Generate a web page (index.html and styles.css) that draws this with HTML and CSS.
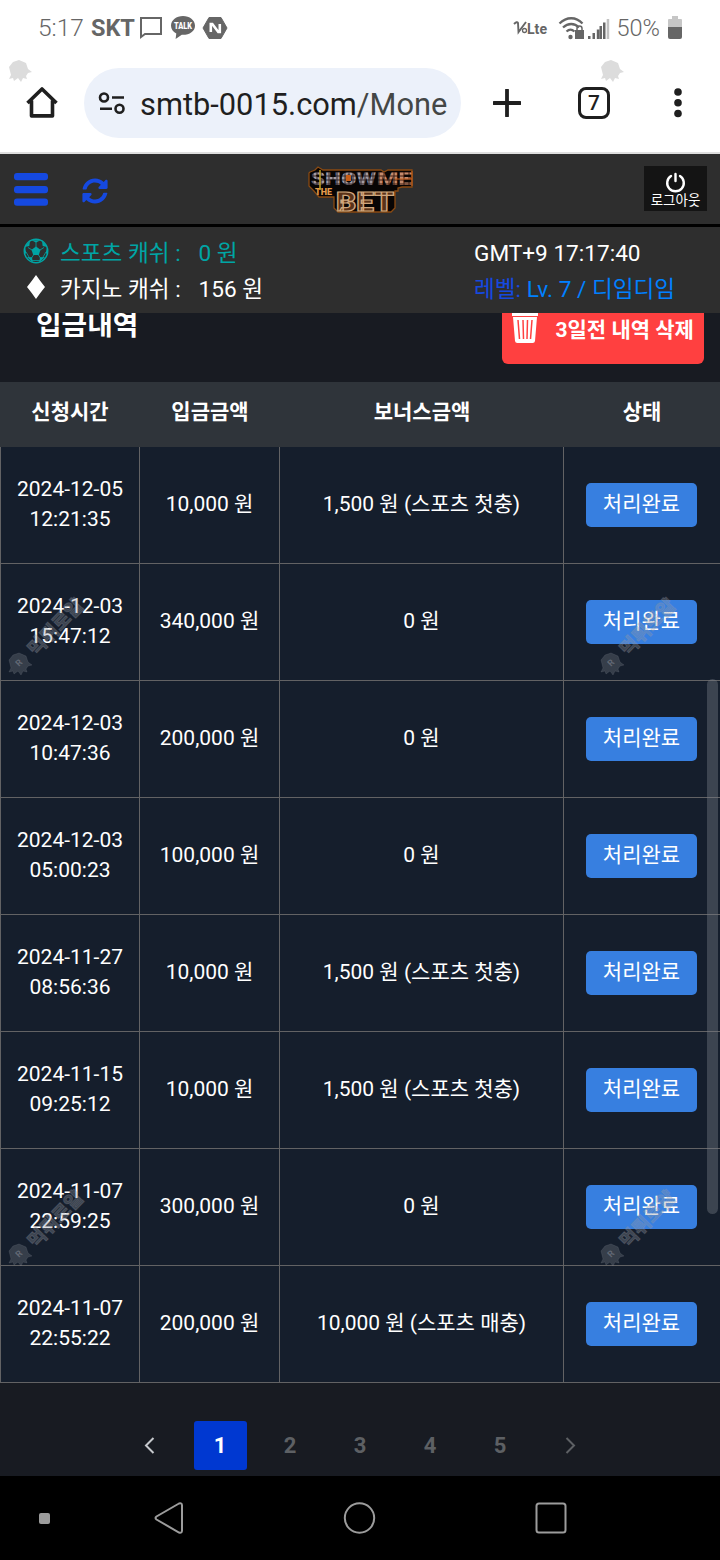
FILE: index.html
```
<!DOCTYPE html>
<html lang="ko">
<head>
  <meta charset="UTF-8">
  <meta name="viewport" content="width=device-width, initial-scale=1.0">
  <title>입금내역</title>
  <link rel="stylesheet" href="styles.css">
</head>
<body>
  <div class="browser">
    <div class="status">
      <div class="status-left">
        <span class="clock">5:17</span>
        <b class="carrier">SKT</b>
        <svg class="ico-msg" width="24" height="24" viewBox="0 0 24 24"><path d="M2 2h20v16H6l-4 3z" fill="none" stroke="#666" stroke-width="2"/></svg>
        <svg class="ico-talk" width="26" height="26" viewBox="0 0 26 26"><path d="M13 1C6.500 1 1 5 1 10.700c0 3.300 2 6 5.300 7.700l-.7 5.600 6.200-4.200c7.200.5 13.200-3.500 13.200-9.100C25 5 19.500 1 13 1z" fill="#666"/><text x="13" y="14" text-anchor="middle" textLength="18" lengthAdjust="spacingAndGlyphs" font-size="8.500" font-weight="900" fill="#fff">TALK</text></svg>
        <svg class="ico-n" width="26" height="24" viewBox="0 0 26 24"><path d="M7 1.500h12L25 12l-6 10.500H7L1 12z" fill="#666" stroke="#666" stroke-linejoin="round"/><path d="M8.800 16V8h1.500l6 8h1.500V8" fill="none" stroke="#fff" stroke-width="2.600"/></svg>
      </div>
      <div class="status-right">
        <svg width="36" height="18" viewBox="0 0 36 18"><path d="M1 5q3-3 4-1l.5 9L13 3" fill="none" stroke="#666" stroke-width="1.900"/><circle cx="11.500" cy="11.500" r="2" fill="none" stroke="#666" stroke-width="1.300"/><text x="14" y="14.500" textLength="20" lengthAdjust="spacingAndGlyphs" font-size="15.500" font-weight="700" fill="#666">Lte</text></svg>
        <svg class="ico-wifi" width="27" height="24" viewBox="0 0 27 24"><g fill="none" stroke="#666" stroke-width="2.300"><path d="M1.500 7.500c7-7 16.500-7 23 0"/><path d="M5 11.500c5-4.700 11.500-4.700 16 0"/><path d="M8.500 15.500c3-2.600 5-2.600 8 0"/></g><circle cx="12.500" cy="21" r="2.200" fill="#666"/><path d="M17 14h9v9h-9z" fill="#666"/><path d="M19 14v-1.500a2.500 2.500 0 0 1 5 0V14" fill="none" stroke="#666" stroke-width="1.500"/></svg>
        <svg class="ico-signal" width="22" height="22" viewBox="0 0 22 22" fill="#666"><path d="M0 18h2.500v3H0zM4.500 15H7v6H4.500zM8.800 11.500h2.500V21H8.800zM11.500 8H14v13h-2.500zM15 4.500h2.500V21H15z"/><path d="M18.700 1h2.500v20h-2.500z" fill="#c2c2c2"/></svg>
        <span class="percent">50%</span>
        <svg class="ico-battery" width="14" height="23" viewBox="0 0 14 23"><path d="M4 0h6v3h3a1 1 0 0 1 1 1v8H0V4a1 1 0 0 1 1-1h3z" fill="#c6c6c6"/><path d="M0 11h14v10a2 2 0 0 1-2 2H2a2 2 0 0 1-2-2z" fill="#666"/></svg>
      </div>
    </div>
    <div class="toolbar">
      <svg class="ico-home" width="36" height="36" viewBox="0 0 36 36"><path d="M3.500 18 18 4l14.500 14M7.500 15.500v15.400h21V15.500" fill="none" stroke="#1f1f1f" stroke-width="3.600" stroke-linejoin="round"/></svg>
      <div class="url">
        <svg width="28" height="24" viewBox="0 0 28 24" fill="none" stroke="#1f1f1f" stroke-width="2.600"><circle cx="6" cy="6.500" r="4"/><path d="M14 6.500h12M2 17.700h12"/><circle cx="21.500" cy="17.700" r="4"/></svg>
        <span class="address">smtb-0015.com<i>/Mone</i></span>
      </div>
      <svg class="ico-plus" width="28" height="28" viewBox="0 0 28 28"><path d="M14 1v26M1 14h26" stroke="#1f1f1f" stroke-width="3.800" stroke-linecap="round"/></svg>
      <span class="tabs">7</span>
      <svg class="ico-more" width="8" height="30" viewBox="0 0 8 30" fill="#1f1f1f"><circle cx="4" cy="4" r="3.800"/><circle cx="4" cy="14.700" r="3.800"/><circle cx="4" cy="25.500" r="3.800"/></svg>
    </div>
  </div>

  <header class="header">
    <div class="header-left">
      <svg width="34" height="33" viewBox="0 0 34 33" fill="#1549e0"><rect width="34" height="7.300" rx="3"/><rect y="13" width="34" height="7.300" rx="3"/><rect y="25.500" width="34" height="7.300" rx="3"/></svg>
      <svg class="ico-refresh" width="26" height="26" viewBox="0 0 512 512" fill="#1549e0"><path d="M370.700 133.300C339.500 104 298.900 88 255.800 88c-77.500.1-144.300 53.200-162.800 126.900-1.300 5.400-6.100 9.200-11.700 9.200H24.100c-7.500 0-13.200-6.800-11.800-14.200C33.900 94.900 134.800 8 256 8c66.400 0 126.800 26.100 171.300 68.700L463 41c15.100-15.100 41-4.400 41 17v134c0 13.300-10.700 24-24 24H346c-21.400 0-32.100-25.900-17-41zM32 296h134c21.400 0 32.100 25.900 17 41l-41.800 41.800c31.300 29.300 71.800 45.300 114.900 45.300 77.400-.1 144.300-53.100 162.800-126.800 1.300-5.400 6.100-9.200 11.700-9.200h57.300c7.500 0 13.200 6.800 11.800 14.200C478.100 417.100 377.200 504 256 504c-66.400 0-126.800-26.100-171.300-68.700L49 471c-15.100 15.100-41 4.400-41-17V320c0-13.300 10.700-24 24-24z"/></svg>
    </div>
    <svg class="logo" width="108" height="50" viewBox="0 0 108 50">
      <defs>
        <pattern id="mosaic" width="4" height="4" patternUnits="userSpaceOnUse"><path d="M0 0h4v4H0z" fill="#a39ba0"/><path d="M0 3h4M2 0v4" stroke="#33252a"/></pattern>
        <pattern id="mosaic-warm" width="5" height="4" patternUnits="userSpaceOnUse"><path d="M0 0h5v4H0z" fill="#c48a6c"/><path d="M0 3h5M2 0v4" stroke="#3d1d12"/></pattern>
      </defs>
      <path d="M3 7 8 5l3-3 5 3h58l3 2 4-2h24v17h-10l-4 1v3h-3v17l-4 4H31l-4-4V32H12l-5-6-5-5V8z" fill="#080504" stroke="#8a4a12" stroke-width="1.300"/>
      <text x="4" y="19.500" class="logo-top" fill="url(#mosaic)" textLength="65" lengthAdjust="spacingAndGlyphs">SHOW</text>
      <text x="70" y="19.500" class="logo-top" fill="url(#mosaic-warm)" textLength="35" lengthAdjust="spacingAndGlyphs">ME</text>
      <text x="8" y="29.500" class="logo-the" textLength="17" lengthAdjust="spacingAndGlyphs">THE</text>
      <text x="29" y="45.500" class="logo-bet" textLength="58" lengthAdjust="spacingAndGlyphs">BET</text>
      <path d="M88 14h17M105 6v15" stroke="#c8601d"/><path d="M39 10h5v6h-5z" fill="#c65c17"/><path d="M13 5v20" stroke="#c5a320" stroke-width="1.500"/>
    </svg>
    <div class="logout">
      <svg width="22" height="21" viewBox="0 0 22 21"><path d="M6 4a8.300 8.300 0 1 0 9 0M10.500 2v7" fill="none" stroke="#fff" stroke-width="2.400" stroke-linecap="round"/></svg>
      <span>로그아웃</span>
    </div>
  </header>

  <div class="info">
    <div class="cash sports">
      <svg width="26" height="26" viewBox="0 0 26 26"><circle cx="13" cy="13" r="11.700" fill="none" stroke="#00a5a5" stroke-width="1.500"/><g fill="#00a5a5"><path d="m13 8.500 4.500 3.300-1.700 5.200h-5.600l-1.700-5.200z"/><path d="M8.500 2.200 13 4.600l4.500-2.400zM2 9.500l1.200 5L1.500 17zM1.700 9l4.600-1 .7-5zM24 9.500l-1.200 5 1.700 2.500zM24.300 9l-4.600-1-.7-5zM4 19l5 .2.700 5zM22 19l-5 .2-.7 5z"/></g><path d="M13 9V4M9 12 5 9.500M17 12l4-2.500M10.500 17l-2 3M15.500 17l2 3M3 14l3 5M23 14l-3 5M9 22.500h8" stroke="#00a5a5" stroke-width=".8" fill="none"/></svg>
      <span class="cash-name">스포츠 캐쉬 :</span><span>0 원</span>
    </div>
    <div class="gmt">GMT+9 17:17:40</div>
    <div class="cash">
      <svg width="26" height="26" viewBox="0 0 26 26"><path d="M13 1q4.500 6.500 9 12-4.500 5.500-9 12-4.500-6.500-9-12 4.500-5.500 9-12z" fill="#fff"/></svg>
      <span class="cash-name">카지노 캐쉬 :</span><span>156 원</span>
    </div>
    <div class="level"><b>레벨:</b> Lv. 7 / 디임디임</div>
  </div>

  <main class="content">
    <div class="title-row">
      <h1 class="title">입금내역</h1>
      <div class="delete">
        <svg width="26" height="32" viewBox="0 0 26 32"><path d="M0 2h26v3H0zM1 6h24l-2 24q-.3 2-2.300 2H5.300Q3.300 32 3 30z" fill="#fff"/><path d="m6 9 1.500 19M11 9l.5 19M15.500 9l-.5 19M20 9l-1.500 19" stroke="#ff4040" stroke-width="1.500"/></svg>
        <span>3일전 내역 삭제</span>
      </div>
    </div>
    <table class="history">
      <thead>
        <tr><th class="c-time">신청시간</th><th class="c-amount">입금금액</th><th class="c-bonus">보너스금액</th><th class="c-state">상태</th></tr>
      </thead>
      <tbody>
        <tr><td>2024-12-05<br>12:21:35</td><td>10,000 원</td><td>1,500 원 (스포츠 첫충)</td><td><span class="done">처리완료</span></td></tr>
        <tr><td>2024-12-03<br>15:47:12</td><td>340,000 원</td><td>0 원</td><td><span class="done">처리완료</span></td></tr>
        <tr><td>2024-12-03<br>10:47:36</td><td>200,000 원</td><td>0 원</td><td><span class="done">처리완료</span></td></tr>
        <tr><td>2024-12-03<br>05:00:23</td><td>100,000 원</td><td>0 원</td><td><span class="done">처리완료</span></td></tr>
        <tr><td>2024-11-27<br>08:56:36</td><td>10,000 원</td><td>1,500 원 (스포츠 첫충)</td><td><span class="done">처리완료</span></td></tr>
        <tr><td>2024-11-15<br>09:25:12</td><td>10,000 원</td><td>1,500 원 (스포츠 첫충)</td><td><span class="done">처리완료</span></td></tr>
        <tr><td>2024-11-07<br>22:59:25</td><td>300,000 원</td><td>0 원</td><td><span class="done">처리완료</span></td></tr>
        <tr><td>2024-11-07<br>22:55:22</td><td>200,000 원</td><td>10,000 원 (스포츠 매충)</td><td><span class="done">처리완료</span></td></tr>
      </tbody>
    </table>
    <div class="pages">
      <span class="page"><svg width="12" height="18" viewBox="0 0 12 18"><path d="M9.500 1 2 8.500 9.500 16" fill="none" stroke="#c5c8cc" stroke-width="2"/></svg></span>
      <span class="page active">1</span>
      <span class="page">2</span>
      <span class="page">3</span>
      <span class="page">4</span>
      <span class="page">5</span>
      <span class="page"><svg width="12" height="18" viewBox="0 0 12 18"><path d="M2.500 1 10 8.500 2.500 16" fill="none" stroke="#5d6064" stroke-width="2"/></svg></span>
    </div>
  </main>

  <nav class="navbar">
    <i class="dot"></i>
    <svg class="nav-back" width="32" height="34" viewBox="0 0 32 34"><path d="M26 2.500 3.500 15.500q-2 1.500 0 3L26 31.500q3 1 3-2v-25q0-3-3-2z" fill="none" stroke="#9c9c9c" stroke-width="2"/></svg>
    <svg class="nav-home" width="34" height="34" viewBox="0 0 34 34"><circle cx="16.500" cy="17" r="14.700" fill="none" stroke="#9c9c9c" stroke-width="2"/></svg>
    <svg width="34" height="34" viewBox="0 0 34 34"><rect x="2.500" y="2.500" width="29" height="29" rx="2.500" fill="none" stroke="#9c9c9c" stroke-width="2"/></svg>
  </nav>

  <!-- overlays -->
  <div class="scrollbar"></div>
  <svg class="marks" width="720" height="1560" viewBox="0 0 720 1560">
    <defs>
      <path id="seal" d="m-1-10 7 3 2 6 4 3-4 1-2 3 1 3-4-1-2 4-3-4-4 3-1-3-4 1 2-4-2-8 4-5z"/>
    </defs>
    <g class="seal-light"><use href="#seal" x="20" y="70"/><use href="#seal" x="612" y="70"/></g>
    <g class="seal-dark">
      <use href="#seal" x="20" y="663"/><use href="#seal" x="612" y="663"/>
      <use href="#seal" x="20" y="1254"/><use href="#seal" x="612" y="1254"/>
    </g>
    <g class="mark-r">
      <text transform="translate(19 667) rotate(-45)">R</text><text transform="translate(611 667) rotate(-45)">R</text>
      <text transform="translate(19 1258) rotate(-45)">R</text><text transform="translate(611 1258) rotate(-45)">R</text>
    </g>
    <g class="mark-text">
      <text transform="translate(36 657) rotate(-46)">먹튀로얄</text>
      <text transform="translate(628 657) rotate(-46)">먹튀로얄</text>
      <text transform="translate(36 1249) rotate(-46)">먹튀로얄</text>
      <text transform="translate(628 1249) rotate(-46)">먹튀로얄</text>
    </g>
  </svg>
</body>
</html>
```
FILE: styles.css
```
*{
  box-sizing: border-box;
}
body{
  position: relative;
  display: flex;
  flex-direction: column;
  width: 720px;
  height: 1560px;
  margin: 0;
  overflow: hidden;
  background: #181b22;
  color: #fff;
  font-family: Roboto, "Noto Sans CJK KR", sans-serif;
}
svg{
  display: block;
  flex: none;
}
/* 브라우저 */
.browser{
  height: 154px;
  border-bottom: 2px solid #dedede;
  background: #fff;
  color: #666;
}
.status{
  display: flex;
  justify-content: space-between;
  height: 68px;
  padding: 12px 38px 0 38px;
}
.status-left,
.status-right{
  display: flex;
  align-items: center;
  height: 32px;
  font-size: 24px;
  line-height: 32px;
}
.status-right{
  height: 31px;
}
.clock,
.percent{
  font-weight: 300;
}
.clock{
  font-size: 24.5px;
}
.carrier{
  margin-left: 7px;
  font-size: 23.5px;
}
.ico-msg{
  margin-left: 4px;
}
.ico-talk{
  margin-left: 7px;
}
.ico-n{
  margin-left: 6px;
}
.ico-wifi{
  margin-left: 9px;
}
.ico-signal{
  margin: 2px 0 0 3px;
}
.percent{
  margin: 1px 0 0 7px;
  font-size: 23.5px;
}
.ico-battery{
  margin-left: 8px;
}
.toolbar{
  display: flex;
  align-items: center;
  height: 70px;
  padding: 0 38px 0 24px;
}
.url{
  display: flex;
  align-items: center;
  width: 377px;
  height: 70px;
  margin-left: 24px;
  padding-left: 14px;
  border-radius: 35px;
  background: #ecf1fa;
}
.address{
  margin: 3px 0 0 14px;
  color: #1f1f1f;
  font-size: 30.8px;
  white-space: nowrap;
}
.address i{
  color: #444746;
  font-style: normal;
}
.ico-plus{
  margin-left: 32px;
}
.tabs{
  width: 32px;
  height: 32px;
  margin-left: 57px;
  border: 3.5px solid #1f1f1f;
  border-radius: 8px;
  color: #1f1f1f;
  font-size: 21px;
  font-weight: 500;
  line-height: 27px;
  text-align: center;
}
.ico-more{
  margin-left: 64px;
}
/* 상단 */
.header{
  display: flex;
  justify-content: space-between;
  align-items: center;
  height: 73px;
  padding: 0 13px 0 14px;
  border-bottom: 3px solid #000;
  background: #2e2e2e;
}
.header-left{
  display: flex;
  align-items: center;
  width: 293px;
}
.ico-refresh{
  margin: 3px 0 0 34px;
}
.logo{
  margin-top: 2px;
}
.logo-top{
  font-size: 18px;
  font-weight: 900;
}
.logo-the{
  fill: #e39a4c;
  font-size: 9px;
  font-weight: 900;
}
.logo-bet{
  fill: #5a3218;
  stroke: #cfa67c;
  stroke-width: 1.2;
  font-size: 26px;
  font-weight: 900;
}
.logout{
  display: flex;
  flex-direction: column;
  align-items: center;
  width: 63px;
  height: 45px;
  margin: 0 0 2px 229px;
  padding-top: 6px;
  background: #141414;
  font-size: 13.5px;
  line-height: 15px;
}
.info{
  display: grid;
  grid-template-columns: 451px 1fr;
  grid-template-rows: 36px 36px;
  height: 86px;
  padding: 8px 0 0 23px;
  background: #2e2e2e;
  font-size: 22.6px;
  line-height: 38px;
}
.cash{
  display: flex;
}
.cash svg{
  margin-top: 3px;
}
.cash-name{
  width: 149.5px;
  padding-left: 11px;
}
.sports{
  color: #00a5a5;
}
.level{
  color: #0080ff;
}
.level b{
  color: #1549e0;
  font-weight: 400;
}
/* 입금내역 */
.content{
  height: 1163px;
  overflow: hidden;
}
.title-row{
  display: flex;
  justify-content: space-between;
  height: 69px;
  padding: 0 16px 0 36px;
}
.title{
  margin: -6px 0 0;
  font-size: 27.8px;
  line-height: 38px;
}
.delete{
  display: flex;
  width: 202px;
  height: 71px;
  margin-top: -20px;
  padding: 18px 0 0 10px;
  border-radius: 6px;
  background: #ff4040;
  font-size: 21px;
  font-weight: 700;
  line-height: 38px;
  white-space: nowrap;
}
.delete span{
  margin-left: 17.5px;
}
.history{
  width: 720px;
  border-spacing: 0;
  table-layout: fixed;
  font-size: 21px;
  line-height: 30px;
  text-align: center;
}
.history th{
  height: 65px;
  padding: 0 0 5px;
  background: #2f343a;
}
.c-time,
.c-amount{
  width: 140px;
}
.c-bonus{
  width: 284px;
}
.history td{
  height: 117px;
  padding: 0 0 2px;
  border-right: 1px solid #626264;
  border-bottom: 1px solid #626264;
  background: #151e2c;
}
.history td:first-child{
  border-left: 1px solid #626264;
}
.history td:last-child{
  border-right: 0;
}
.done{
  display: block;
  width: 111px;
  height: 44px;
  margin: 2px auto 0 22px;
  border-radius: 5px;
  background: #377fe0;
  line-height: 42px;
}
.pages{
  display: flex;
  justify-content: center;
  gap: 17px;
  padding-top: 38px;
}
.page{
  display: flex;
  justify-content: center;
  align-items: center;
  width: 53px;
  height: 49px;
  border-radius: 3px;
  color: #5d6064;
  font-size: 22px;
  font-weight: 700;
}
.page.active{
  background: #0038d1;
  color: #fff;
}
/* 하단 내비게이션 */
.navbar{
  display: flex;
  align-items: center;
  height: 84px;
  padding-left: 39px;
  background: #000;
}
.dot{
  width: 11px;
  height: 11px;
  border-radius: 2px;
  background: #9c9c9c;
}
.nav-back{
  margin-left: 103px;
}
.nav-home{
  margin: 0 157px 0 158px;
}
.scrollbar{
  position: absolute;
  top: 679px;
  right: 2px;
  width: 11px;
  height: 535px;
  border-radius: 6px;
  background: rgba(120, 125, 135, .4);
}
.marks{
  position: absolute;
  top: 0;
  left: 0;
}
.seal-light{
  fill: #dcdcdc;
}
.seal-dark{
  fill: rgba(125, 130, 140, .32);
  stroke: rgba(125, 130, 140, .2);
}
.mark-r{
  fill: rgba(180, 185, 195, .35);
  font-size: 9px;
  font-weight: 700;
}
.mark-text{
  fill: rgba(150, 155, 165, .33);
  stroke: rgba(150, 155, 165, .25);
  font-size: 19px;
  font-weight: 900;
}
```
